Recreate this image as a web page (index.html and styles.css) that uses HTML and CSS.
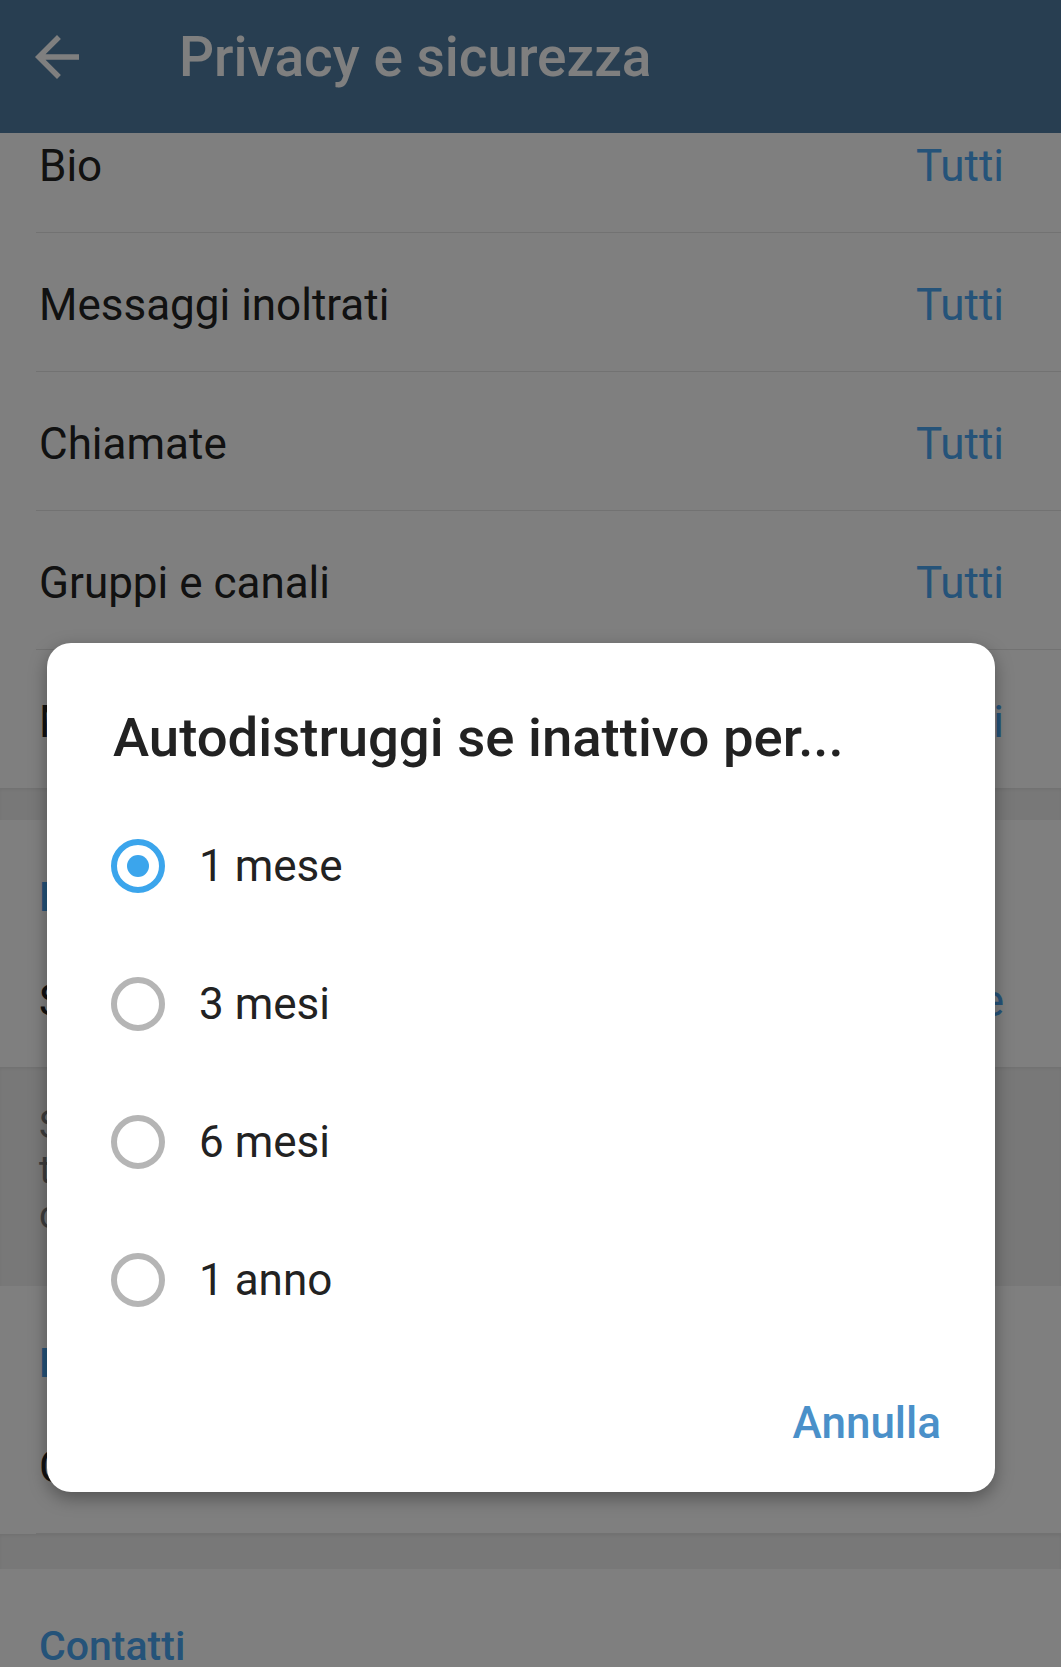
FILE: index.html
```html
<!DOCTYPE html>
<html lang="it">
<head>
<meta charset="utf-8">
<title>Privacy e sicurezza</title>
<link rel="stylesheet" href="styles.css">
</head>
<body>
<div class="app">
  <header class="appbar">
    <svg class="back" viewBox="0 0 24 24" width="66" height="66" aria-hidden="true">
      <path d="M20 11H7.83l5.59-5.59L12 4l-8 8 8 8 1.41-1.41L7.83 13H20v-2z" fill="#ffffff"/>
    </svg>
    <h1 class="appbar-title">Privacy e sicurezza</h1>
  </header>

  <main class="content">
    <section class="section section--scrolled">
      <div class="row row--divided"><span class="row-label">Bio</span><span class="row-value">Tutti</span></div>
      <div class="row row--divided"><span class="row-label">Messaggi inoltrati</span><span class="row-value">Tutti</span></div>
      <div class="row row--divided"><span class="row-label">Chiamate</span><span class="row-value">Tutti</span></div>
      <div class="row row--divided"><span class="row-label">Gruppi e canali</span><span class="row-value">Tutti</span></div>
      <div class="row"><span class="row-label">Messaggi vocali</span><span class="row-value">Tutti</span></div>
    </section>
    <div class="gap"></div>

    <section class="section">
      <h2 class="section-title">Elimina il mio account</h2>
      <div class="row"><span class="row-label">Se inattivo per</span><span class="row-value">1 mese</span></div>
    </section>
    <p class="info">Se non accedi almeno una volta in questo<br>tempo, il tuo account sarà eliminato con<br>chat e contatti.</p>

    <section class="section">
      <h2 class="section-title">Bot e siti web</h2>
      <div class="row row--divided"><span class="row-label">Cancella dati di pagamento e spedizione</span></div>
    </section>
    <div class="gap gap--tall"></div>

    <section class="section">
      <h2 class="section-title">Contatti</h2>
    </section>
  </main>

  <div class="scrim">
    <div class="dialog" role="dialog" aria-labelledby="dlg-title">
      <h3 class="dialog-title" id="dlg-title">Autodistruggi se inattivo per...</h3>
      <ul class="options">
        <li class="option"><span class="radio radio--on"><span class="radio-dot"></span></span><span class="option-label">1 mese</span></li>
        <li class="option"><span class="radio"></span><span class="option-label">3 mesi</span></li>
        <li class="option"><span class="radio"></span><span class="option-label">6 mesi</span></li>
        <li class="option"><span class="radio"></span><span class="option-label">1 anno</span></li>
      </ul>
      <div class="dialog-actions"><span class="dialog-button">Annulla</span></div>
    </div>
  </div>
</div>
</body>
</html>
```

FILE: styles.css
```css
* { box-sizing: border-box; }

html, body {
  margin: 0;
  padding: 0;
}

body {
  font-family: Roboto, "Noto Sans", "Liberation Sans", sans-serif;
  background: #ffffff;
  color: #222222;
}

.app {
  position: relative;
  width: 1061px;
  height: 1667px;
  overflow: hidden;
  display: flex;
  flex-direction: column;
}

/* App bar */
.appbar {
  flex: 0 0 133px;
  height: 133px;
  background: #517da2;
  display: flex;
  align-items: flex-start;
  padding: 24px 0 0 24px;
}

.back {
  flex: 0 0 66px;
  display: block;
}

.appbar-title {
  margin: 1px 0 0 89px;
  font-size: 55px;
  line-height: 64px;
  font-weight: 500;
  color: #ffffff;
}

/* Content */
.content {
  flex: 1 1 auto;
  overflow: hidden;
  background: #f0f0f0;
}

.section {
  background: #ffffff;
}

.section--scrolled {
  margin-top: -39px;
}

.row {
  height: 138px;
  margin-left: 36px;
  padding: 46px 57px 0 3px;
  display: flex;
  justify-content: space-between;
  align-items: flex-start;
  font-size: 44px;
  line-height: 52px;
  white-space: nowrap;
}

.row--divided {
  height: 139px;
  border-bottom: 1px solid #e4e4e4;
}

.row-label {
  color: #222222;
}

.row-value {
  color: #4aa6f2;
}

.gap {
  height: 32px;
  background: #f0f0f0;
  box-shadow: inset 0 2px 3px rgba(0, 0, 0, 0.05);
}

.gap--tall {
  height: 35px;
}

.section-title {
  margin: 0;
  height: 109px;
  padding: 53px 0 0 39px;
  font-size: 41px;
  line-height: 48px;
  font-weight: 500;
  color: #4aa6f2;
}

.info {
  margin: 0;
  padding: 35px 40px 49px 39px;
  background: #f0f0f0;
  color: #7a7a7a;
  font-size: 38.5px;
  line-height: 45px;
  white-space: nowrap;
  box-shadow: inset 0 2px 3px rgba(0, 0, 0, 0.05);
}

/* Dialog overlay */
.scrim {
  position: absolute;
  inset: 0;
  background: rgba(0, 0, 0, 0.5);
  padding: 643px 0 0 47px;
}

.dialog {
  width: 948px;
  height: 849px;
  background: #ffffff;
  border-radius: 24px;
  box-shadow: 0 6px 18px rgba(0, 0, 0, 0.35);
  padding: 62px 54px 0 64px;
  display: flex;
  flex-direction: column;
}

.dialog-title {
  margin: 0 0 0 2px;
  font-size: 54.5px;
  line-height: 64px;
  font-weight: 500;
  color: #222222;
  white-space: nowrap;
}

.options {
  list-style: none;
  margin: 28px 0 0 0;
  padding: 0;
}

.option {
  height: 138px;
  display: flex;
  align-items: center;
  gap: 34px;
}

.radio {
  flex: 0 0 54px;
  width: 54px;
  height: 54px;
  border-radius: 50%;
  border: 6px solid #b5b5b5;
  display: flex;
  align-items: center;
  justify-content: center;
}

.radio--on {
  border-color: #3ba5ec;
}

.radio-dot {
  width: 22px;
  height: 22px;
  border-radius: 50%;
  background: #3ba5ec;
}

.option-label {
  font-size: 44px;
  line-height: 52px;
  color: #222222;
}

.dialog-actions {
  margin-top: 48px;
  display: flex;
  justify-content: flex-end;
}

.dialog-button {
  font-size: 44px;
  line-height: 52px;
  font-weight: 500;
  color: #4a90c9;
}
```
